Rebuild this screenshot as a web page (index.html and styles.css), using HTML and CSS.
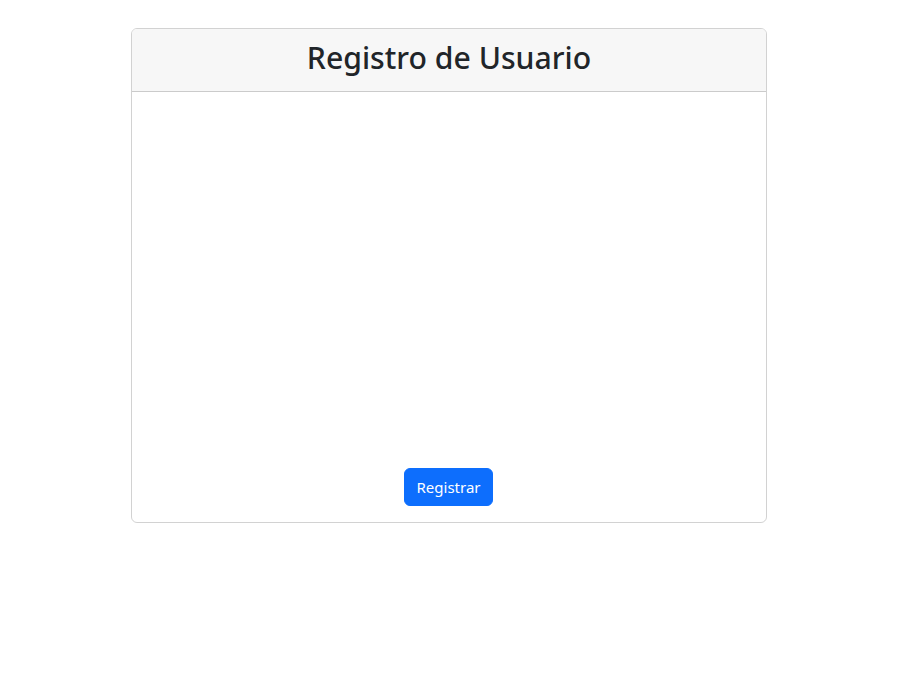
FILE: index.html
```html
<!DOCTYPE html>
<html lang="es">
<head>
<meta charset="utf-8">
<title>Registro de Usuario</title>
<link rel="stylesheet" href="styles.css">
</head>
<body>
<div class="page">
  <div class="card">
    <div class="card-header">
      <h2 class="title">Registro de Usuario</h2>
    </div>
    <div class="card-body">
      <div class="spacer"></div>
      <div class="actions">
        <button class="btn" type="button">Registrar</button>
      </div>
    </div>
  </div>
</div>
</body>
</html>
```
FILE: styles.css
```css
* { box-sizing: border-box; }
html, body { margin: 0; padding: 0; background: #fff; }
body {
  font-family: "Noto Sans", "Open Sans", sans-serif;
  color: #212529;
  font-size: 16px;
  line-height: 1.5;
}
.page {
  padding-top: 28px;
  padding-left: 131px;
}
.card {
  width: 636px;
  border: 1px solid rgba(0,0,0,.175);
  border-radius: 6px;
  display: flex;
  flex-direction: column;
}
.card-header {
  background: #f7f7f7;
  border-bottom: 1px solid rgba(0,0,0,.175);
  border-radius: 5px 5px 0 0;
  padding: 6px 16px 0;
  height: 63px;
  text-align: center;
}
.title {
  margin: 0;
  font-size: 30.2px;
  font-weight: 500;
  line-height: 46px;
}
.card-body {
  padding: 16px;
  display: flex;
  flex-direction: column;
  height: 430px;
}
.spacer { flex: 1; }
.actions { display: flex; justify-content: center; padding-right: 2px; }
.btn {
  font-family: inherit;
  font-size: 15px;
  line-height: 24px;
  color: #fff;
  background: #0d6efd;
  border: 1px solid #0d6efd;
  border-radius: 6px;
  padding: 6px 12px;
  width: 89px;
  height: 38px;
  cursor: pointer;
}
```
